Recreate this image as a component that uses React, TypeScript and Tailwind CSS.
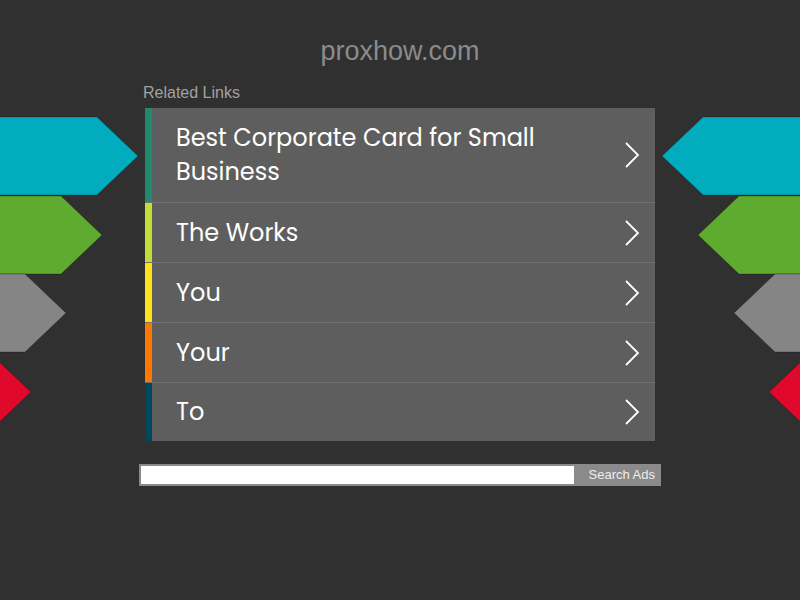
import { ReactNode } from 'react';

const links = [
  { title: 'Best Corporate Card for Small Business', bar: 'bg-[#1f8a6c]', h: 'h-[94px]' },
  { title: 'The Works', bar: 'bg-[#c4dc35]', h: 'h-[60px]' },
  { title: 'You', bar: 'bg-[#ffe01b]', h: 'h-[60px]' },
  { title: 'Your', bar: 'bg-[#ff7800]', h: 'h-[60px]' },
  { title: 'To', bar: 'bg-[#00465c]', h: 'h-[59px]' },
];

// decorative arrows along both edges: [top, tipX, colour]
const arrows = [
  { top: 117, tip: 138, color: '#00acbe' },
  { top: 196, tip: 102, color: '#5eab30' },
  { top: 274, tip: 66, color: '#858585' },
  { top: 353, tip: 31, color: '#e0092c' },
];

const Arrow = ({ tip, color, flip }: { tip: number; color: string; flip?: boolean }) => (
  <svg width={tip + 2} height={80} viewBox={`0 0 ${tip + 2} 80`} className={flip ? '-scale-x-100' : ''}>
    <polygon
      points={`-60,1 ${tip - 41},1 ${tip},40 ${tip - 41},79 -60,79`}
      fill={color}
      stroke="rgba(0,0,0,0.25)"
      strokeWidth="1"
    />
  </svg>
);

const Chevron = () => (
  <svg width="16" height="28" viewBox="0 0 16 28" className="shrink-0">
    <polyline points="2,2 14,14 2,26" fill="none" stroke="#fff" strokeWidth="1.8" />
  </svg>
);

const Row = ({ children, bar, h, first }: { children: ReactNode; bar: string; h: string; first?: boolean }) => (
  <a href="#" className={`flex ${h} ${first ? '' : 'border-t border-[#707070]'}`}>
    <div className={`w-[7px] shrink-0 ${bar}`} />
    <div className="flex flex-1 items-center justify-between pl-6 pr-[15px]">
      <span className="text-[24px] leading-[34px] text-white font-['Poppins','Open_Sans',sans-serif] pr-8">
        {children}
      </span>
      <Chevron />
    </div>
  </a>
);

export default function App() {
  return (
    <div className="relative min-h-[600px] w-full overflow-hidden bg-[#303030] font-['Liberation_Sans',Arial,sans-serif]">
      {arrows.map((a) => (
        <div key={'l' + a.top} className="absolute left-0" style={{ top: a.top - 1 }}>
          <Arrow tip={a.tip} color={a.color} />
        </div>
      ))}
      {arrows.map((a) => (
        <div key={'r' + a.top} className="absolute right-0" style={{ top: a.top - 1 }}>
          <Arrow tip={a.tip} color={a.color} flip />
        </div>
      ))}

      <div className="relative mx-auto flex w-[522px] flex-col items-center">
        <h1 className="pt-[34px] text-[27px] leading-[34px] text-[#8b8b8b]">proxhow.com</h1>

        <div className="mt-[16px] w-[510px]">
          <div className="ml-[-2px] text-[16px] leading-[18px] text-[#a2a2a2]">Related Links</div>
          <div className="mt-[6px] flex flex-col bg-[#5e5e5e]">
            {links.map((l, i) => (
              <Row key={l.title} bar={l.bar} h={l.h} first={i === 0}>
                {l.title}
              </Row>
            ))}
          </div>
        </div>

        <form className="mt-[23px] flex h-[22px] w-[522px] border border-[#8a8a8a] bg-[#8a8a8a]">
          <input type="text" className="h-full w-[435px] border border-[#8a8a8a] bg-white outline-none" />
          <button type="button" className="flex-1 text-right pr-[5px] text-[13px] leading-[20px] text-[#eeeeee]">
            Search Ads
          </button>
        </form>
      </div>
    </div>
  );
}
